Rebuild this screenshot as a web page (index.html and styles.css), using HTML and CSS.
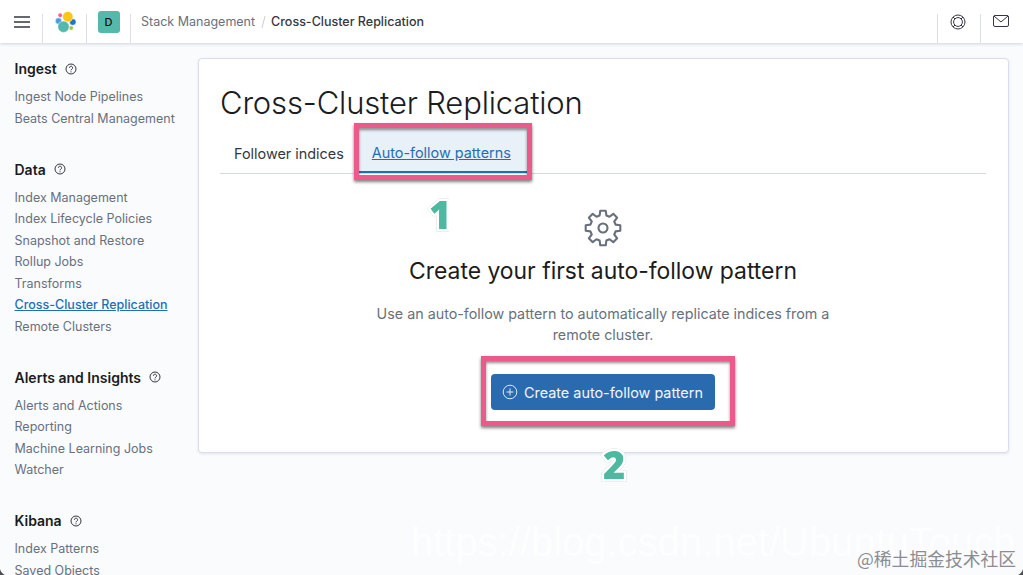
FILE: index.html
```html
<!DOCTYPE html>
<html lang="en">
<head>
    <meta charset="UTF-8">
    <title>Cross-Cluster Replication</title>
    <link rel="stylesheet" href="styles.css">
</head>
<body>
    <!-- Top bar -->
    <header class="topbar">
        <div class="cell cell-menu">
            <svg width="16" height="14" viewBox="0 0 16 14"><path d="M0 2h16M0 7h16M0 12h16" stroke="#343741" stroke-width="1.6" fill="none"/></svg>
        </div>
        <div class="cell cell-logo">
            <svg width="22" height="22" viewBox="0 0 22 22" stroke="#fff" stroke-width=".5">
                <circle cx="6.2" cy="4.300" r="2.200" fill="#ef5ba1"/>
                <circle cx="4.500" cy="10" r="3.200" fill="#4a9fe0"/>
                <circle cx="17.200" cy="17" r="2.200" fill="#97c93d"/>
                <circle cx="18.800" cy="11" r="3.300" fill="#1b76c6"/>
                <circle cx="13.800" cy="5.700" r="5.200" fill="#fec514"/>
                <circle cx="9.500" cy="15.700" r="5.700" fill="#54b8aa"/>
            </svg>
        </div>
        <div class="cell cell-space">
            <span class="avatar">D</span>
        </div>
        <nav class="crumbs">
            <span class="crumb">Stack Management</span>
            <span class="crumb-sep"></span>
            <span class="crumb-current">Cross-Cluster Replication</span>
        </nav>
        <div class="cell cell-right">
            <svg width="16" height="16" viewBox="0 0 16 16" fill="none" stroke="#343741" stroke-width="1">
                <circle cx="8" cy="8" r="7"/>
                <circle cx="8" cy="8" r="4.4"/>
                <path d="M3 3l2 2M13 3l-2 2M3 13l2-2M13 13l-2-2"/>
            </svg>
        </div>
        <div class="cell cell-right">
            <svg width="16" height="13" viewBox="0 0 16 13" fill="none" stroke="#343741" stroke-width="1">
                <rect x=".5" y=".5" width="15" height="11" rx="1.5"/>
                <path d="M1 1l7 6 7-6"/>
            </svg>
        </div>
    </header>

    <div class="page">
        <!-- Menu lateral -->
        <aside class="sidebar">
            <section class="group">
                <h3 class="group-title">Ingest <svg class="help" viewBox="0 0 12 12"><use href="#help"/></svg></h3>
                <a class="item">Ingest Node Pipelines</a>
                <a class="item">Beats Central Management</a>
            </section>
            <section class="group">
                <h3 class="group-title">Data <svg class="help" viewBox="0 0 12 12"><use href="#help"/></svg></h3>
                <a class="item">Index Management</a>
                <a class="item">Index Lifecycle Policies</a>
                <a class="item">Snapshot and Restore</a>
                <a class="item">Rollup Jobs</a>
                <a class="item">Transforms</a>
                <a class="item item-active">Cross-Cluster Replication</a>
                <a class="item">Remote Clusters</a>
            </section>
            <section class="group">
                <h3 class="group-title">Alerts and Insights <svg class="help" viewBox="0 0 12 12"><use href="#help"/></svg></h3>
                <a class="item">Alerts and Actions</a>
                <a class="item">Reporting</a>
                <a class="item">Machine Learning Jobs</a>
                <a class="item">Watcher</a>
            </section>
            <section class="group">
                <h3 class="group-title">Kibana <svg class="help" viewBox="0 0 12 12"><use href="#help"/></svg></h3>
                <a class="item">Index Patterns</a>
                <a class="item">Saved Objects</a>
            </section>
        </aside>

        <!-- Painel principal -->
        <main class="panel">
            <h1 class="title">Cross-Cluster Replication</h1>
            <div class="tabs">
                <a class="tab">Follower indices</a>
                <a class="tab tab-active">Auto-follow patterns</a>
            </div>
            <div class="empty">
                <svg class="gear" width="38" height="38" viewBox="-19 -19 38 38" fill="none" stroke="#69707d" stroke-width="2.1" stroke-linejoin="round">
                    <path d="M-3.36-12.56L-2.74-17.3H2.74L3.36-12.56L6.51-11.26L10.3-14.17L14.17-10.3L11.26-6.51L12.56-3.36L17.3-2.74V2.74L12.56 3.36L11.26 6.51L14.17 10.3L10.3 14.17L6.51 11.26L3.36 12.56L2.74 17.3H-2.74L-3.36 12.56L-6.51 11.26L-10.3 14.17L-14.17 10.3L-11.26 6.51L-12.56 3.36L-17.3 2.74V-2.74L-12.56-3.36L-11.26-6.51L-14.17-10.3L-10.3-14.17L-6.51-11.26Z"/>
                    <circle r="4.5"/>
                </svg>
                <h2 class="empty-title">Create your first auto-follow pattern</h2>
                <p class="empty-text">Use an auto-follow pattern to automatically replicate indices from a remote cluster.</p>
                <button class="btn">
                    <svg width="16" height="16" viewBox="0 0 16 16" fill="none" stroke="#dfe9f5" stroke-width="1"><circle cx="8" cy="8" r="6.8"/><path d="M8 4.5v7M4.500 8h7"/></svg>
                    Create auto-follow pattern
                </button>
            </div>
        </main>
    </div>

    <!-- Anotações por cima da página -->
    <div class="mark mark-tab"></div>
    <div class="mark mark-btn"></div>
    <span class="step step-1">1</span>
    <span class="step step-2">2</span>
    <span class="wm-url">https://blog.csdn.net/UbuntuTouch</span>
    <span class="wm-cn">@稀土掘金技术社区</span>

    <!-- Cantos da janela -->
    <svg class="corner corner-left" width="6" height="6" viewBox="0 0 6 6"><path d="M0 0Q1 4 5 6H0Z" fill="#4a4d55"/></svg>
    <svg class="corner corner-right" width="6" height="6" viewBox="0 0 6 6"><path d="M6 0Q5 4 1 6H6Z" fill="#4a4d55"/></svg>

    <svg width="0" height="0" class="defs">
        <symbol id="help" viewBox="0 0 12 12">
            <circle cx="6" cy="6" r="5" fill="none" stroke="#343741" stroke-width="1"/>
            <path d="M4.400 4.800a1.600 1.600 0 1 1 2.500 1.300c-.6.400-.9.700-.9 1.300" fill="none" stroke="#343741" stroke-width="1"/>
            <circle cx="6" cy="8.800" r=".6" fill="#343741"/>
        </symbol>
    </svg>
</body>
</html>
```

FILE: styles.css
```css
html, body {
    margin: 0;
    height: 100%;
    overflow: hidden;
}

body {
    position: relative;
    font-family: Inter, "Noto Sans", sans-serif;
    background-color: #fafbfd;
    color: #343741;
}

/* Top bar */
.topbar {
    display: flex;
    align-items: stretch;
    height: 43px;
    background-color: #fff;
    box-shadow: 0 1px 3px rgba(110, 120, 150, 0.3);
    position: relative;
}

.cell {
    display: flex;
    align-items: center;
    justify-content: center;
    box-sizing: border-box;
    width: 44px;
    border-right: 1px solid #d9dee9;
    margin-top: 14px;
}

.cell > * {
    margin-top: -14px;
}

.cell-menu {
    width: 43px;
    padding-left: 1px;
}

.cell-right {
    width: 43px;
    padding-right: 2px;
    border-right: none;
    border-left: 1px solid #d9dee9;
}

.avatar {
    display: flex;
    align-items: center;
    justify-content: center;
    width: 22px;
    height: 22px;
    border-radius: 3px;
    background-color: #54b8aa;
    color: #111;
    font-size: 11px;
    font-weight: 500;
}

.crumbs {
    flex: 1;
    display: flex;
    align-items: center;
    padding-left: 10px;
    font-size: 12.5px;
}

.crumb {
    color: #69707d;
}

.crumb-sep {
    width: 1px;
    height: 12px;
    margin: 0 7.5px;
    background-color: #c9ced8;
    transform: rotate(15deg);
}

.crumb-current {
    color: #343741;
    font-weight: 500;
}

/* Page */
.page {
    display: flex;
    align-items: flex-start;
    height: 532px;
    overflow: hidden;
}

.sidebar {
    width: 198px;
    height: 532px;
    flex-shrink: 0;
    padding: 15.5px 0 0 14.5px;
    box-sizing: border-box;
    overflow: hidden;
}

.group {
    margin-bottom: 30px;
}

.group-title {
    display: flex;
    align-items: center;
    gap: 8px;
    margin: 0 0 7.5px;
    height: 20px;
    font-size: 14px;
    font-weight: 600;
    color: #1a1c21;
}

.help {
    width: 12px;
    height: 12px;
}

.item {
    display: block;
    height: 21.5px;
    line-height: 21.5px;
    font-size: 12.5px;
    color: #69707d;
    white-space: nowrap;
}

.item-active {
    color: #1f6fb5;
    font-weight: 500;
    text-decoration: underline;
}

.panel {
    width: 811px;
    height: 395px;
    margin-top: 15px;
    padding: 24px 22px 0 21px;
    box-sizing: border-box;
    background-color: #fff;
    border: 1px solid #d9dee9;
    border-radius: 4px;
    box-shadow: 0 1px 3px rgba(110, 120, 150, 0.18);
}

.title {
    margin: 0;
    height: 40px;
    line-height: 40px;
    font-size: 31px;
    font-weight: 300;
    letter-spacing: -0.16px;
    color: #1a1c21;
}

/* Tabs */
.tabs {
    display: flex;
    margin-top: 6px;
    height: 44px;
    border-bottom: 1px solid #d3dae6;
}

.tab {
    display: flex;
    align-items: center;
    padding: 4px 14px 0;
    font-size: 14.4px;
    color: #343741;
}

.tab-active {
    padding-right: 16px;
    color: #1f6fb5;
    text-decoration: underline;
    background-color: #e8f0f8;
    border-bottom: 2px solid #1f6fb5;
}

/* Empty state */
.empty {
    display: flex;
    flex-direction: column;
    align-items: center;
    padding-top: 35px;
}

.empty-title {
    margin: 8px 0 0;
    font-size: 22.9px;
    font-weight: 400;
    line-height: 32px;
    color: #1a1c21;
}

.empty-text {
    width: 480px;
    margin: 16px 0 0;
    font-size: 14.3px;
    line-height: 21px;
    text-align: center;
    color: #69707d;
}

.btn {
    display: flex;
    align-items: center;
    gap: 6px;
    width: 224px;
    height: 36px;
    margin-top: 29px;
    padding: 0 11px;
    border: none;
    border-radius: 4px;
    background-color: #2a6bb0;
    color: #f2f6fb;
    font-family: inherit;
    font-size: 14.4px;
    font-weight: 400;
    white-space: nowrap;
}

/* Annotations */
.mark {
    position: absolute;
    box-sizing: border-box;
    border: 5px solid #ec5a8c;
    box-shadow: 0 2px 3px rgba(0, 0, 0, 0.5), inset 0 2px 3px rgba(0, 0, 0, 0.45);
}

.mark-tab {
    left: 354px;
    top: 123px;
    width: 178px;
    height: 57px;
}

.mark-btn {
    left: 481px;
    top: 356px;
    width: 254px;
    height: 70px;
}

.step {
    position: absolute;
    font-family: "Open Sans", sans-serif;
    font-size: 38px;
    font-weight: 800;
    line-height: 1;
    color: #4fb8a0;
    -webkit-text-stroke: 5px #fff;
    paint-order: stroke fill;
    filter: drop-shadow(0 0 0.5px #bbb);
}

.step-1 {
    left: 429px;
    top: 195px;
}

.step-2 {
    left: 603px;
    top: 445px;
}

.wm-url {
    position: absolute;
    left: 411px;
    top: 520px;
    font-family: "Liberation Sans", sans-serif;
    font-size: 40px;
    color: rgba(255, 255, 255, 0.75);
    white-space: nowrap;
}

.wm-cn {
    position: absolute;
    left: 857px;
    top: 547px;
    font-family: "Noto Sans CJK SC", sans-serif;
    font-size: 17.8px;
    line-height: 22px;
    color: #8a8d93;
    white-space: nowrap;
}

.corner {
    position: absolute;
    bottom: 0;
}

.corner-left {
    left: 0;
}

.corner-right {
    right: 0;
}

.defs {
    position: absolute;
}
```
